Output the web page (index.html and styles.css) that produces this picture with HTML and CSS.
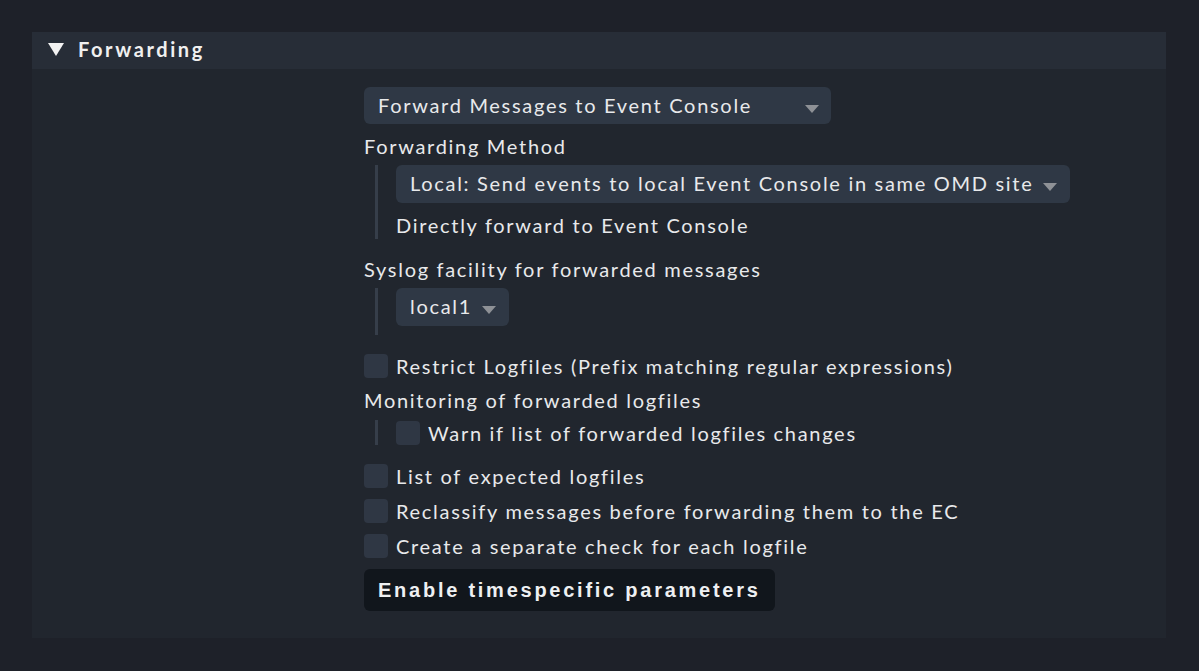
FILE: index.html
```html
<!DOCTYPE html>
<html>
<head>
<meta charset="utf-8">
<link rel="stylesheet" href="styles.css">
</head>
<body>
<div class="panel">
  <div class="panel-head">
    <span class="tri"></span>
    <span class="head-title">Forwarding</span>
  </div>
  <div class="panel-body">
    <div class="form">
      <div class="select wide1"><span>Forward Messages to Event Console</span><span class="arrow"></span></div>
      <div class="label first">Forwarding Method</div>
      <div class="indent">
        <div class="select"><span>Local: Send events to local Event Console in same OMD site</span><span class="arrow"></span></div>
        <div class="sub">Directly forward to Event Console</div>
      </div>
      <div class="label gap">Syslog facility for forwarded messages</div>
      <div class="indent padded">
        <div class="select"><span>local1</span><span class="arrow"></span></div>
      </div>
      <div class="check spaced"><span class="box"></span><span>Restrict Logfiles (Prefix matching regular expressions)</span></div>
      <div class="label tight">Monitoring of forwarded logfiles</div>
      <div class="indent nested">
        <div class="check compact"><span class="box"></span><span>Warn if list of forwarded logfiles changes</span></div>
      </div>
      <div class="check spaced"><span class="box"></span><span>List of expected logfiles</span></div>
      <div class="check"><span class="box"></span><span>Reclassify messages before forwarding them to the EC</span></div>
      <div class="check"><span class="box"></span><span>Create a separate check for each logfile</span></div>
      <div class="button">Enable timespecific parameters</div>
    </div>
  </div>
</div>
</body>
</html>
```
FILE: styles.css
```css
html, body {
  margin: 0;
  padding: 0;
  background: #1e2129;
  width: 1199px;
  height: 671px;
  overflow: hidden;
}
body {
  font-family: Lato, "Open Sans", sans-serif;
  color: #e8e9eb;
  font-size: 20px;
  letter-spacing: 1.7px;
}
.panel {
  margin: 32px 33px 0 32px;
  background: #21262e;
  height: 606px;
}
.panel-head {
  height: 37px;
  box-sizing: border-box;
  padding: 0 0 3px 16px;
  background: #272d37;
  display: flex;
  align-items: center;
  gap: 14px;
}
.tri {
  width: 0;
  height: 0;
  border-left: 8px solid transparent;
  border-right: 8px solid transparent;
  border-top: 13px solid #f2f2f2;
}
.head-title {
  font-weight: 700;
  font-size: 20px;
  letter-spacing: 2.6px;
  color: #f0f0f0;
}
.panel-body {
  padding: 18px 0 0 332px;
}
.form {
  display: flex;
  flex-direction: column;
  align-items: flex-start;
}
.select {
  display: flex;
  align-items: center;
  height: 38px;
  background: #2f3845;
  border-radius: 6px;
  padding: 0 13px 2px 14px;
  box-sizing: border-box;
  white-space: nowrap;
}
.select.wide1 {
  width: 467px;
  height: 37px;
  justify-content: space-between;
  padding-right: 12px;
}
.arrow {
  width: 0;
  height: 0;
  border-left: 7px solid transparent;
  border-right: 7px solid transparent;
  border-top: 8px solid #8e9196;
  margin-left: 10px;
  margin-top: 8px;
}
.label {
  line-height: 27px;
}
.label.first { margin-top: 9px; }
.label.gap { margin-top: 17px; }
.label.tight { margin-top: 4px; }
.indent {
  margin-left: 11px;
  margin-top: 5px;
  border-left: 3px solid #363e4a;
  padding-left: 18px;
  display: flex;
  flex-direction: column;
  align-items: flex-start;
}
.indent.padded { padding-bottom: 9px; }
.indent.nested { margin-top: 6px; }
.sub {
  margin-top: 9px;
  line-height: 27px;
}
.check {
  display: flex;
  align-items: center;
  height: 35px;
  gap: 8px;
}
.check.spaced { margin-top: 13px; }
.check.compact { height: 25px; }
.box {
  width: 24px;
  height: 24px;
  background: #2f3744;
  border-radius: 4px;
  display: inline-block;
  flex: none;
}
.button {
  margin-top: 6px;
  background: #11161c;
  border-radius: 6px;
  height: 42px;
  padding: 0 14px;
  display: flex;
  align-items: center;
  font-family: "Liberation Sans", Arial, sans-serif;
  font-weight: 700;
  font-size: 20px;
  letter-spacing: 2.75px;
  color: #eef0f2;
}
```
